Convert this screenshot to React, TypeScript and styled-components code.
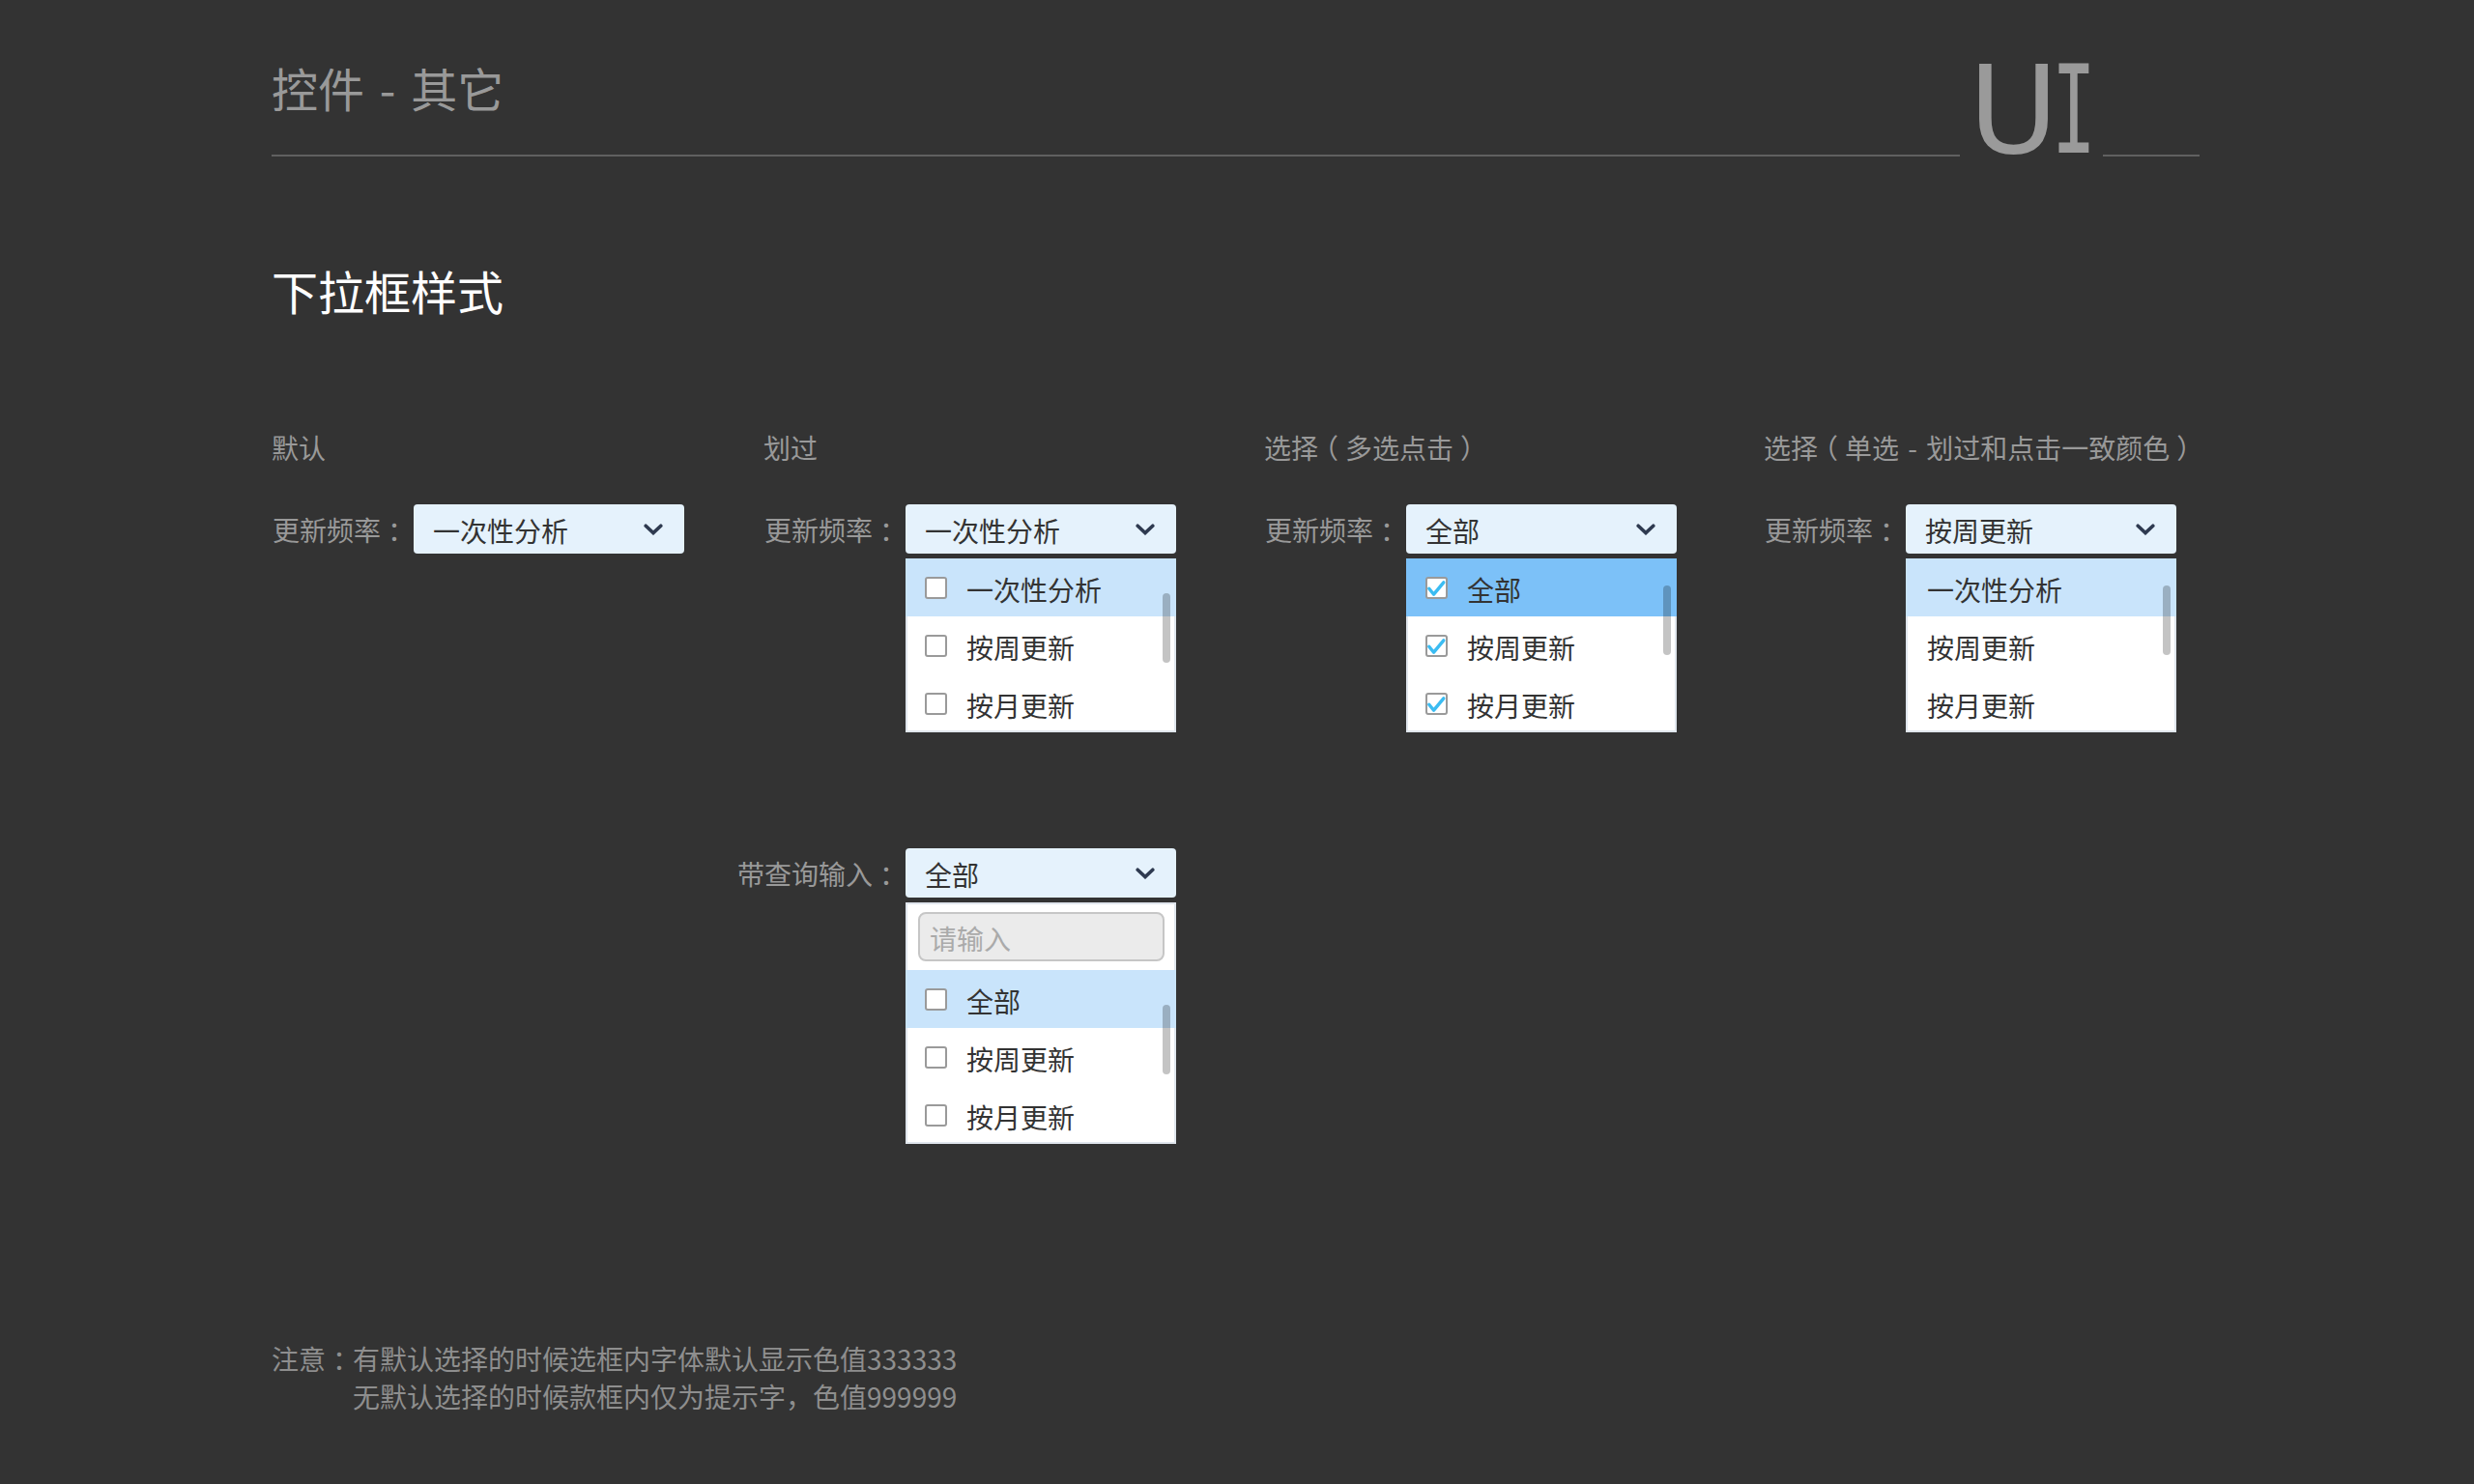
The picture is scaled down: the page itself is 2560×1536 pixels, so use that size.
import React from "react";
import styled, { createGlobalStyle } from "styled-components";

const GlobalStyle = createGlobalStyle`
  html, body {
    margin: 0;
    padding: 0;
    background: #333333;
  }
  body {
    font-family: "Noto Sans CJK SC", "Noto Sans", sans-serif;
    min-height: 1536px;
  }
`;

const Page = styled.div`
  box-sizing: border-box;
  width: 2560px;
  min-height: 1536px;
  padding: 66px 0 0 281px;
  background: #333333;
`;

const Header = styled.header`
  display: flex;
  align-items: flex-end;
`;

const TitleBlock = styled.div`
  width: 1747px;
  display: flex;
  flex-direction: column;
`;

const Title = styled.h1`
  margin: 0 0 46px;
  font-size: 48px;
  line-height: 48px;
  font-weight: 400;
  color: #999999;
  white-space: pre;
  word-spacing: 5px;
`;

const Rule = styled.div<{ $width?: number }>`
  height: 2px;
  background: #606060;
  width: ${(p) => (p.$width ? `${p.$width}px` : "auto")};
  flex: 0 0 auto;
`;

const Logo = styled.div`
  display: flex;
  margin-left: 9px;
  margin-right: 20px;
  font-family: "DejaVu Sans", sans-serif;
  font-size: 127px;
  line-height: 96px;
  color: #9a9a9a;
`;

const LogoU = styled.span`
  letter-spacing: -7px;
`;

const LogoI = styled.span`
  display: inline-block;
  width: 33px;
  font-family: "DejaVu Sans Mono", monospace;
  transform: scaleX(0.6);
  transform-origin: left center;
`;

const SectionTitle = styled.h2`
  margin: 114px 0 0;
  font-size: 48px;
  line-height: 48px;
  font-weight: 400;
  color: #ffffff;
`;

const Columns = styled.div`
  display: grid;
  grid-template-columns: 509px 518px 517px 1fr;
  margin-top: 125px;
  align-items: start;
`;

const Column = styled.section`
  display: flex;
  flex-direction: column;
`;

const ColumnLabel = styled.div`
  font-size: 28px;
  line-height: 28px;
  color: #999999;
  white-space: pre;
  word-spacing: 3px;
`;

/* full-width punctuation drawn centred in its em box */
const Punct = styled.span`
  display: inline-block;
  width: 1em;
  text-align: center;
  font-feature-settings: "halt";
`;

const Field = styled.div<{ $top: number }>`
  display: flex;
  align-items: flex-start;
  margin-top: ${(p) => p.$top}px;
`;

const FieldLabel = styled.div`
  box-sizing: border-box;
  flex: 0 0 141px;
  min-width: 0;
  margin-right: 6px;
  padding-top: 2px;
  display: flex;
  justify-content: flex-end;
  height: 51px;
  line-height: 49px;
  font-size: 28px;
  color: #999999;
  white-space: nowrap;
`;

const Dropdown = styled.div`
  width: 280px;
  flex: 0 0 280px;
  display: flex;
  flex-direction: column;
  gap: 5px;
`;

const SelectBox = styled.div`
  box-sizing: border-box;
  height: 51px;
  padding: 2px 22px 0 20px;
  display: flex;
  align-items: center;
  justify-content: space-between;
  background: #e5f2fc;
  border-radius: 4px;
`;

const SelectText = styled.span`
  font-size: 28px;
  line-height: 40px;
  color: #333333;
`;

const ChevronWrap = styled.span`
  display: flex;
  margin-top: -2px;
`;

const Menu = styled.div`
  position: relative;
  display: flex;
  flex-direction: column;
  background: #ffffff;
  box-shadow: inset 0 0 0 2px #e0e6ed;
`;

const SearchInput = styled.input`
  box-sizing: border-box;
  height: 51px;
  margin: 10px 12px 9px 13px;
  padding: 2px 10px 0;
  border: 2px solid #c6c6c6;
  border-radius: 8px;
  background: #ebebeb;
  font-family: "Noto Sans CJK SC", "Noto Sans", sans-serif;
  font-size: 28px;
  color: #333333;
  outline: none;
  &::placeholder {
    color: #aaaaaa;
  }
`;

type OptionState = "idle" | "hover" | "active";

const optionBg: Record<OptionState, string> = {
  idle: "transparent",
  hover: "#c9e4fb",
  active: "#7cc1f8",
};

const Option = styled.div<{ $state: OptionState; $pad: number }>`
  box-sizing: border-box;
  height: 60px;
  display: flex;
  align-items: center;
  gap: 20px;
  padding-left: ${(p) => p.$pad}px;
  background: ${(p) => optionBg[p.$state]};
  font-size: 28px;
  color: #333333;
`;

const OptionText = styled.span`
  line-height: 40px;
  padding-top: 3px;
`;

const CheckBox = styled.span`
  box-sizing: border-box;
  width: 23px;
  height: 23px;
  border: 2px solid #9a9a9a;
  border-radius: 3px;
  background: #ffffff;
  display: flex;
  align-items: center;
  justify-content: center;
  flex: 0 0 auto;
`;

const ScrollThumb = styled.div<{ $top: number }>`
  position: absolute;
  right: 6px;
  top: ${(p) => p.$top}px;
  width: 8px;
  height: 72px;
  border-radius: 4px;
  background: rgba(0, 0, 0, 0.23);
`;

const Note = styled.div`
  margin-top: 203px;
  display: flex;
  font-size: 28px;
  line-height: 39px;
  color: #8e8e8e;
`;

const NoteBody = styled.div`
  display: flex;
  flex-direction: column;
`;

const Chevron = () => (
  <svg width="20" height="12" viewBox="0 0 20 12" aria-hidden>
    <polyline
      points="2.2,2.2 10,9.6 17.8,2.2"
      fill="none"
      stroke="#2e3a50"
      strokeWidth="3.6"
      strokeLinecap="round"
      strokeLinejoin="miter"
    />
  </svg>
);

const Tick = () => (
  <svg width="19" height="19" viewBox="0 0 19 19" aria-hidden style={{ overflow: "visible" }}>
    <path
      d="M1.8 10.2 L6.6 16.2 L16.8 3.8"
      fill="none"
      stroke="#3bbcf2"
      strokeWidth="3.4"
      strokeLinecap="round"
      strokeLinejoin="round"
    />
  </svg>
);

type Item = { text: string; state: OptionState; checked?: boolean };

type SelectProps = {
  label: React.ReactNode;
  value: string;
  top: number;
  items?: Item[];
  checkboxes?: boolean;
  search?: boolean;
  thumbTop?: number;
};

const SelectField: React.FC<SelectProps> = ({ label, value, top, items, checkboxes, search, thumbTop }) => (
  <Field $top={top}>
    <FieldLabel>
      <span>{label}</span>
    </FieldLabel>
    <Dropdown>
      <SelectBox>
        <SelectText>{value}</SelectText>
        <ChevronWrap>
          <Chevron />
        </ChevronWrap>
      </SelectBox>
      {items && (
        <Menu>
          {search && <SearchInput placeholder="请输入" readOnly />}
          {items.map((it) => (
            <Option key={it.text} $state={it.state} $pad={checkboxes ? 20 : 22}>
              {checkboxes && <CheckBox>{it.checked && <Tick />}</CheckBox>}
              <OptionText>{it.text}</OptionText>
            </Option>
          ))}
          {thumbTop !== undefined && <ScrollThumb $top={thumbTop} />}
        </Menu>
      )}
    </Dropdown>
  </Field>
);

const freqLabel = (
  <>
    更新频率<Punct>：</Punct>
  </>
);

export default function App() {
  return (
    <>
      <GlobalStyle />
      <Page>
        <Header>
          <TitleBlock>
            <Title>控件 - 其它</Title>
            <Rule />
          </TitleBlock>
          <Logo>
            <LogoU>U</LogoU>
            <LogoI>I</LogoI>
          </Logo>
          <Rule $width={100} />
        </Header>

        <SectionTitle>下拉框样式</SectionTitle>

        <Columns>
          <Column>
            <ColumnLabel>默认</ColumnLabel>
            <SelectField label={freqLabel} value="一次性分析" top={45} />
          </Column>

          <Column>
            <ColumnLabel>划过</ColumnLabel>
            <SelectField
              label={freqLabel}
              value="一次性分析"
              top={45}
              checkboxes
              thumbTop={36}
              items={[
                { text: "一次性分析", state: "hover" },
                { text: "按周更新", state: "idle" },
                { text: "按月更新", state: "idle" },
              ]}
            />
            <SelectField
              label={
                <>
                  带查询输入<Punct>：</Punct>
                </>
              }
              value="全部"
              top={120}
              checkboxes
              search
              thumbTop={106}
              items={[
                { text: "全部", state: "hover" },
                { text: "按周更新", state: "idle" },
                { text: "按月更新", state: "idle" },
              ]}
            />
          </Column>

          <Column>
            <ColumnLabel>
              选择<Punct>（</Punct>多选点击<Punct>）</Punct>
            </ColumnLabel>
            <SelectField
              label={freqLabel}
              value="全部"
              top={45}
              checkboxes
              thumbTop={28}
              items={[
                { text: "全部", state: "active", checked: true },
                { text: "按周更新", state: "idle", checked: true },
                { text: "按月更新", state: "idle", checked: true },
              ]}
            />
          </Column>

          <Column>
            <ColumnLabel>
              选择<Punct>（</Punct>单选 - 划过和点击一致颜色<Punct>）</Punct>
            </ColumnLabel>
            <SelectField
              label={freqLabel}
              value="按周更新"
              top={45}
              thumbTop={28}
              items={[
                { text: "一次性分析", state: "hover" },
                { text: "按周更新", state: "idle" },
                { text: "按月更新", state: "idle" },
              ]}
            />
          </Column>
        </Columns>

        <Note>
          <span>
            注意<Punct>：</Punct>
          </span>
          <NoteBody>
            <span>有默认选择的时候选框内字体默认显示色值333333</span>
            <span>无默认选择的时候款框内仅为提示字，色值999999</span>
          </NoteBody>
        </Note>
      </Page>
    </>
  );
}
